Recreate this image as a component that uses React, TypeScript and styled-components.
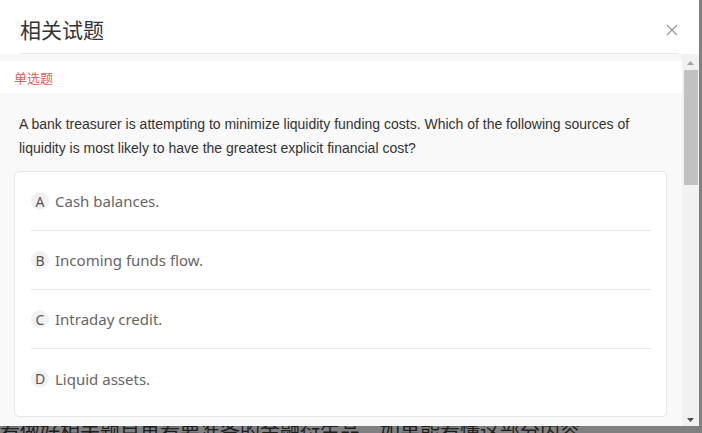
import styled, { createGlobalStyle } from "styled-components";

const options = [
  { key: "A", text: "Cash balances." },
  { key: "B", text: "Incoming funds flow." },
  { key: "C", text: "Intraday credit." },
  { key: "D", text: "Liquid assets." },
];

function App() {
  return (
    <>
      <GlobalStyle />
      <Backdrop>
        <BehindText>看做好相关题目再看要准备的金融衍生品，如果能看懂这部分内容</BehindText>
      </Backdrop>
      <Modal>
        <Header>
          <Title>相关试题</Title>
          <CloseButton aria-label="close">
            <svg width="12" height="12" viewBox="0 0 12 12">
              <path d="M1 1 L11 11 M11 1 L1 11" stroke="#9a9a9a" strokeWidth="1.3" fill="none" />
            </svg>
          </CloseButton>
        </Header>
        <Body>
          <Content>
            <TypeBar>单选题</TypeBar>
            <QuestionArea>
              <Question>
                A bank treasurer is attempting to minimize liquidity funding costs. Which of the following sources of
                liquidity is most likely to have the greatest explicit financial cost?
              </Question>
              <OptionCard>
                {options.map((o, i) => (
                  <OptionRow key={o.key} $last={i === options.length - 1}>
                    <Badge>{o.key}</Badge>
                    <OptionText>{o.text}</OptionText>
                  </OptionRow>
                ))}
              </OptionCard>
            </QuestionArea>
          </Content>
          <Scrollbar>
            <Arrow>
              <svg width="7" height="4" viewBox="0 0 7 4">
                <path d="M0 4 L3.5 0 L7 4 Z" fill="#a0a0a0" />
              </svg>
            </Arrow>
            <Track>
              <Thumb />
            </Track>
            <Arrow>
              <svg width="7" height="4" viewBox="0 0 7 4">
                <path d="M0 0 L3.5 4 L7 0 Z" fill="#505050" />
              </svg>
            </Arrow>
          </Scrollbar>
        </Body>
      </Modal>
    </>
  );
}
export default App;

const GlobalStyle = createGlobalStyle`
  html, body {
    margin: 0;
    padding: 0;
    width: 702px;
    height: 433px;
    overflow: hidden;
    background: #7c7c7c;
  }
  * {
    box-sizing: border-box;
  }
`;

const Backdrop = styled.div`
  width: 702px;
  height: 433px;
  background: #808080;
  padding-top: 419px;
  overflow: hidden;
`;

const BehindText = styled.p`
  margin: 0;
  white-space: nowrap;
  font-family: "Noto Sans CJK SC", sans-serif;
  font-size: 20px;
  line-height: 24px;
  color: #1e1e1e;
`;

const Modal = styled.div`
  position: absolute;
  top: 0;
  left: 0;
  width: 699px;
  height: 426px;
  background: #fff;
  display: flex;
  flex-direction: column;
  overflow: hidden;
`;

const Header = styled.div`
  height: 54px;
  margin: 0 20px;
  padding-top: 6px;
  display: flex;
  align-items: center;
  justify-content: space-between;
  border-bottom: 1px solid #e9e9e9;
`;

const Title = styled.h2`
  margin: 0;
  padding-bottom: 2px;
  font-family: "Noto Sans CJK SC", "Noto Sans", sans-serif;
  font-weight: 400;
  font-size: 21px;
  color: #333;
`;

const CloseButton = styled.button`
  border: 0;
  background: none;
  padding: 0;
  display: flex;
  cursor: pointer;
  transform: translate(-1px, 0);
`;

const Body = styled.div`
  flex: 1;
  display: flex;
  min-height: 0;
`;

const Content = styled.div`
  flex: 1;
  display: flex;
  flex-direction: column;
  padding-top: 7px;
  background: #f7f7f7;
  overflow: hidden;
`;

const TypeBar = styled.div`
  height: 32px;
  background: #fff;
  padding-left: 14px;
  display: flex;
  align-items: center;
  font-family: "Noto Sans CJK SC", sans-serif;
  font-size: 13px;
  color: #e0625c;
`;

const QuestionArea = styled.div`
  flex: 1;
  background: #f9f9f9;
  padding: 20px 15px 0 14px;
`;

const Question = styled.p`
  margin: 0 0 11px;
  padding: 0 5px;
  font-family: "Liberation Sans", Arial, sans-serif;
  font-size: 14px;
  line-height: 23.5px;
  color: #333;
`;

const OptionCard = styled.div`
  background: #fff;
  border: 1px solid #e6e6e6;
  border-radius: 5px;
  padding: 0 15px 8px 16px;
`;

const OptionRow = styled.div<{ $last: boolean }>`
  height: 59px;
  display: flex;
  align-items: center;
  gap: 6px;
  border-bottom: ${(p) => (p.$last ? "none" : "1px solid #e8e8e8")};
`;

const Badge = styled.span`
  width: 18px;
  height: 18px;
  border-radius: 50%;
  background: #f1f1f4;
  display: flex;
  align-items: center;
  justify-content: center;
  font-family: "Noto Sans", sans-serif;
  font-size: 14px;
  color: #555;
`;

const OptionText = styled.span`
  font-family: "Noto Sans", "Open Sans", sans-serif;
  font-size: 15px;
  color: #666;
`;

const Scrollbar = styled.div`
  width: 17px;
  display: flex;
  flex-direction: column;
  background: #f1f1f1;
  padding-top: 2px;
`;

const Arrow = styled.div`
  height: 13px;
  display: flex;
  align-items: center;
  justify-content: center;
`;

const Track = styled.div`
  flex: 1;
  padding: 1px 1px 0 2px;
`;

const Thumb = styled.div`
  height: 115px;
  background: #c1c1c1;
`;
